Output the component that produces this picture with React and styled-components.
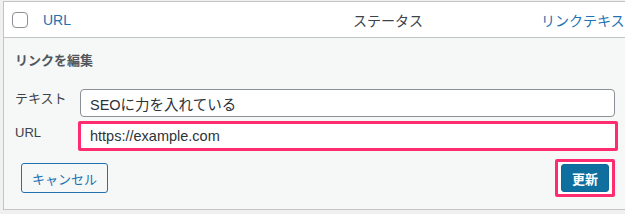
import React from 'react';
import styled, { createGlobalStyle } from 'styled-components';

const GlobalStyle = createGlobalStyle`
  html, body {
    margin: 0;
    padding: 0;
    overflow: hidden;
    background: #f0f0f1;
  }

  body {
    font-family: 'Liberation Sans', 'Noto Sans CJK JP', sans-serif;
    color: #3c434a;
  }
`;

const Page = styled.div`
  padding: 1px 0 0 3px;
`;

const Table = styled.div`
  width: 622px;
  border: 1px solid #c3c4c7;
  border-right: none;
  background: #fff;
`;

const HeaderRow = styled.div`
  display: grid;
  grid-template-columns: 39px 310px 188px 1fr;
  align-items: center;
  height: 35px;
  border-bottom: 1px solid #c3c4c7;
  font-size: 14px;
  white-space: nowrap;
  overflow: hidden;
`;

const CheckCell = styled.div`
  display: flex;
  padding-left: 8px;
`;

const Checkbox = styled.span`
  display: block;
  width: 14px;
  height: 14px;
  border: 1px solid #8c8f94;
  border-radius: 4px;
  background: #fff;
`;

const HeadLink = styled.span`
  color: #2271b1;
`;

const HeadText = styled.span`
  color: #3c434a;
`;

const Panel = styled.div`
  background: #f6f7f7;
  padding: 14px 11px 12px 11px;
`;

const Title = styled.div`
  font-size: 13px;
  line-height: 18px;
  font-weight: 700;
  color: #50575e;
  margin-bottom: 19px;
`;

const Field = styled.div`
  display: grid;
  grid-template-columns: 65px 1fr;
  align-items: start;
  margin-top: ${(p) => p.$gap || 0}px;
`;

const Label = styled.label`
  font-size: 13px;
  line-height: 20px;
  padding-top: ${(p) => p.$offset || 0}px;
  color: #3c434a;
`;

const TextInput = styled.input`
  box-sizing: border-box;
  width: 100%;
  height: 28px;
  margin: 0;
  padding: 0 9px;
  border: 1px solid #8c8f94;
  border-radius: 4px;
  background: #fff;
  font: inherit;
  font-size: 14.5px;
  color: #2c3338;
  outline: none;
`;

const Highlight = styled.div`
  box-sizing: border-box;
  height: 30px;
  margin: 0 -3px 0 -2px;
  border: 3px solid #ff2d6f;
  border-radius: 2px;
  background: #fff;
  display: flex;
`;

const BareInput = styled(TextInput)`
  height: 100%;
  border: none;
  border-radius: 0;
  padding: 0 9px 0 9px;
`;

const Actions = styled.div`
  display: flex;
  justify-content: space-between;
  align-items: center;
  margin-top: 8px;
`;

const SecondaryButton = styled.button`
  box-sizing: border-box;
  height: 30px;
  margin: 0 0 0 6px;
  padding: 0 10px;
  border: 1px solid #2271b1;
  border-radius: 3px;
  background: #f6f7f7;
  color: #2271b1;
  font: inherit;
  font-size: 13px;
  cursor: pointer;
`;

const ButtonHighlight = styled.div`
  display: flex;
  padding: 2px 3px;
  border: 3px solid #ff2d6f;
  border-radius: 2px;
  background: #fff;
`;

const PrimaryButton = styled.button`
  box-sizing: border-box;
  height: 28px;
  width: 48px;
  margin: 0;
  padding: 0;
  border: 1px solid #0e6a98;
  border-radius: 3px;
  background: #0f6f9e;
  color: #fff;
  font: inherit;
  font-size: 13px;
  font-weight: 600;
  cursor: pointer;
`;

export default function App() {
  return (
    <>
      <GlobalStyle />
      <Page>
        <Table>
          <HeaderRow>
            <CheckCell>
              <Checkbox />
            </CheckCell>
            <HeadLink>URL</HeadLink>
            <HeadText>ステータス</HeadText>
            <HeadLink>リンクテキスト</HeadLink>
          </HeaderRow>
          <Panel>
            <Title>リンクを編集</Title>
            <Field>
              <Label>テキスト</Label>
              <TextInput defaultValue="SEOに力を入れている" />
            </Field>
            <Field $gap={4}>
              <Label $offset={2}>URL</Label>
              <Highlight>
                <BareInput defaultValue="https://example.com" />
              </Highlight>
            </Field>
            <Actions>
              <SecondaryButton>キャンセル</SecondaryButton>
              <ButtonHighlight>
                <PrimaryButton>更新</PrimaryButton>
              </ButtonHighlight>
            </Actions>
          </Panel>
        </Table>
      </Page>
    </>
  );
}
